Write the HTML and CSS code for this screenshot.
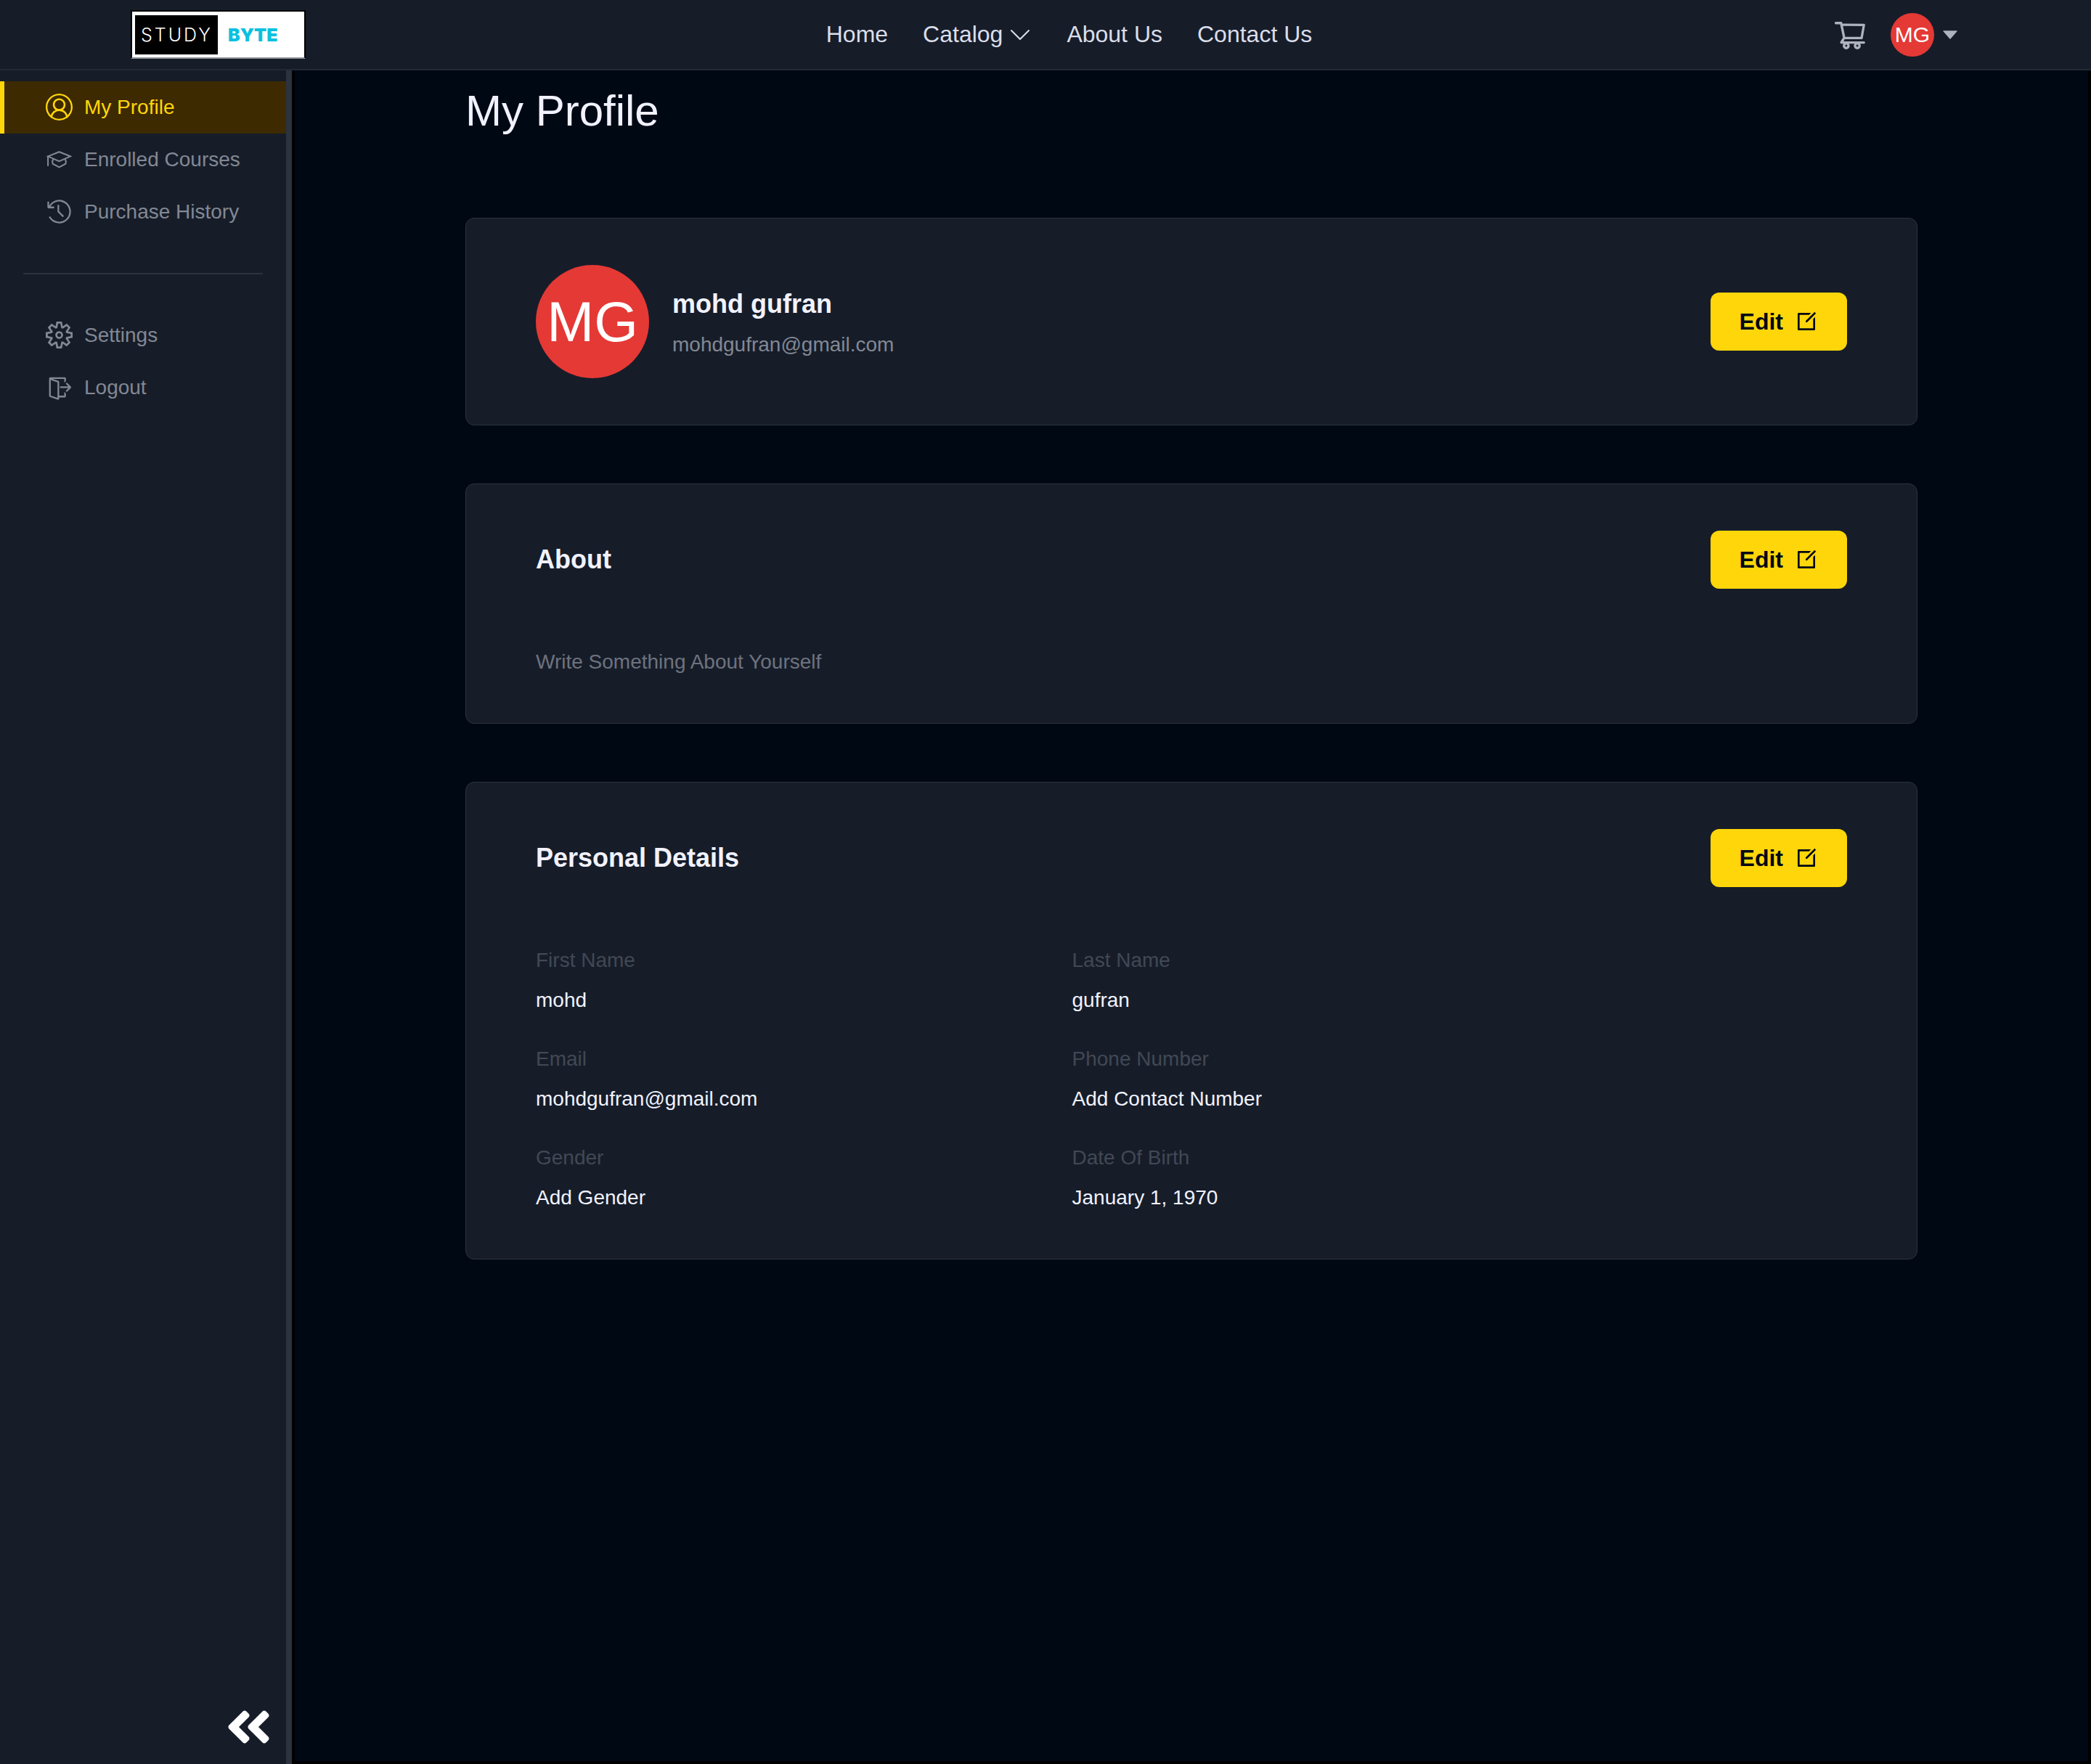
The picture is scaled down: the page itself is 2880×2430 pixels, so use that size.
FILE: index.html
```html
<!DOCTYPE html>
<html lang="en">
<head>
<meta charset="utf-8">
<meta name="viewport" content="width=device-width, initial-scale=1">
<title>My Profile</title>
<link rel="stylesheet" href="styles.css">
</head>
<body>
<svg class="sprite" aria-hidden="true">
  <symbol id="icon-edit" viewBox="0 0 24 24"><path d="M16.7574 2.99678L14.7574 4.99678H5V18.9968H19V9.23943L21 7.23943V19.9968C21 20.5491 20.5523 20.9968 20 20.9968H4C3.44772 20.9968 3 20.5491 3 19.9968V3.99678C3 3.4445 3.44772 2.99678 4 2.99678H16.7574ZM20.4853 2.09729L21.8995 3.5115L12.7071 12.7039L11.2954 12.7064L11.2929 11.2897L20.4853 2.09729Z"/></symbol>
</svg>

<header class="topbar">
  <div class="topbar-inner">
    <a class="logo" href="#"><span class="logo-study">STUDY</span><span class="logo-byte">BYTE</span></a>
    <nav class="nav">
      <a href="#">Home</a>
      <a class="nav-catalog" href="#">Catalog
        <svg class="icon-nav" viewBox="0 0 16 16"><path fill-rule="evenodd" d="M1.646 4.646a.5.5 0 0 1 .708 0L8 10.293l5.646-5.647a.5.5 0 0 1 .708.708l-6 6a.5.5 0 0 1-.708 0l-6-6a.5.5 0 0 1 0-.708z"/></svg>
      </a>
      <a href="#">About Us</a>
      <a href="#">Contact Us</a>
    </nav>
    <div class="account">
      <a class="cart" href="#" aria-label="Cart">
        <svg class="icon-cart" viewBox="0 0 1024 1024"><path d="M922.9 701.9H327.4l29.9-60.9 496.8-.9c16.8 0 31.2-12 34.2-28.6l68.8-385.1c1.8-10.1-.9-20.5-7.5-28.4a34.99 34.99 0 0 0-26.6-12.5l-632-2.1-5.4-25.4c-3.4-16.2-18-28-34.6-28H96.5a35.3 35.3 0 1 0 0 70.6h125.9L246 312.8l58.1 281.3-74.8 122.1a34.96 34.96 0 0 0-3 36.8c6 11.9 18.1 19.4 31.5 19.4h62.8a102.43 102.43 0 0 0-20.6 61.7c0 56.6 46 102.6 102.6 102.6s102.6-46 102.6-102.6c0-22.3-7.4-44-20.6-61.7h161.1a102.43 102.43 0 0 0-20.6 61.7c0 56.6 46 102.6 102.6 102.6s102.6-46 102.6-102.6c0-22.3-7.4-44-20.6-61.7H923c19.4 0 35.3-15.8 35.3-35.3a35.42 35.42 0 0 0-35.4-35.2zM305.7 253l575.8 1.9-56.4 315.8-452.3.8L305.7 253zm96.9 612.7c-17.4 0-31.6-14.2-31.6-31.6 0-17.4 14.2-31.6 31.6-31.6s31.6 14.2 31.6 31.6a31.6 31.6 0 0 1-31.6 31.6zm325.1 0c-17.4 0-31.6-14.2-31.6-31.6 0-17.4 14.2-31.6 31.6-31.6s31.6 14.2 31.6 31.6a31.6 31.6 0 0 1-31.6 31.6z"/></svg>
      </a>
      <button class="account-menu" type="button">
        <span class="avatar avatar-small">MG</span>
        <svg class="icon-caret" viewBox="0 0 1024 1024"><path d="M840.4 300H183.6c-19.7 0-30.7 20.8-18.5 35l328.4 380.8c9.4 10.9 27.5 10.9 37 0L858.9 335c12.2-14.2 1.2-35-18.5-35z"/></svg>
      </button>
    </div>
  </div>
</header>

<div class="layout">
  <aside class="sidebar">
    <nav class="menu">
      <a class="menu-item is-active" href="#">
        <svg class="icon-menu" viewBox="0 0 16 16"><path d="M16 7.992C16 3.58 12.416 0 8 0S0 3.58 0 7.992c0 2.43 1.104 4.62 2.832 6.09.016.016.032.016.032.032.144.112.288.224.448.336.08.048.144.111.224.175A7.98 7.98 0 0 0 8.016 16a7.98 7.98 0 0 0 4.48-1.375c.08-.048.144-.111.224-.16.144-.111.304-.223.448-.335.016-.016.032-.016.032-.032 1.696-1.487 2.8-3.676 2.8-6.106zm-8 7.001c-1.504 0-2.88-.48-4.016-1.279.016-.128.048-.255.08-.383a4.17 4.17 0 0 1 .416-.991c.176-.304.384-.576.64-.816.24-.24.528-.463.816-.639.304-.176.624-.304.976-.4A4.15 4.15 0 0 1 8 10.342a4.185 4.185 0 0 1 2.928 1.166c.368.368.656.8.864 1.295.112.288.192.592.24.911A7.03 7.03 0 0 1 8 14.993zm-2.448-7.4a2.49 2.49 0 0 1-.208-1.024c0-.351.064-.703.208-1.023.144-.32.336-.607.576-.847.24-.24.528-.431.848-.575.32-.144.672-.208 1.024-.208.368 0 .704.064 1.024.208.32.144.608.336.848.575.24.24.432.528.576.847.144.32.208.672.208 1.023 0 .368-.064.704-.208 1.023a2.84 2.84 0 0 1-.576.848 2.84 2.84 0 0 1-.848.575 2.715 2.715 0 0 1-2.064 0 2.84 2.84 0 0 1-.848-.575 2.526 2.526 0 0 1-.56-.848zm7.424 5.306c0-.032-.016-.048-.016-.08a5.22 5.22 0 0 0-.688-1.406 4.883 4.883 0 0 0-1.088-1.135 5.207 5.207 0 0 0-1.04-.608 2.82 2.82 0 0 0 .464-.383 4.2 4.2 0 0 0 .624-.784 3.624 3.624 0 0 0 .528-1.934 3.71 3.71 0 0 0-.288-1.47 3.799 3.799 0 0 0-.816-1.199 3.845 3.845 0 0 0-1.2-.8 3.72 3.72 0 0 0-1.472-.287 3.72 3.72 0 0 0-1.472.288 3.631 3.631 0 0 0-1.2.815 3.84 3.84 0 0 0-.8 1.199 3.71 3.71 0 0 0-.288 1.47c0 .352.048.688.144 1.007.096.336.224.64.4.927.16.288.384.544.624.784.144.144.304.271.48.383a5.12 5.12 0 0 0-1.04.624c-.416.32-.784.703-1.088 1.119a4.999 4.999 0 0 0-.688 1.406c-.016.032-.016.064-.016.08C1.776 11.636.992 9.91.992 7.992.992 4.14 4.144.991 8 .991s7.008 3.149 7.008 7.001a6.96 6.96 0 0 1-2.032 4.907z"/></svg>
        My Profile
      </a>
      <a class="menu-item" href="#">
        <svg class="icon-menu icon-stroke" viewBox="0 0 36 36"><path d="M3 14L18 8l15 6-15 6.500zM3 14V27M10.500 17.500c-2 2-2 4-1 6.500L18 28.500l8.500-4.500c1-2.500 1-4.500-1-6.500"/></svg>
        Enrolled Courses
      </a>
      <a class="menu-item" href="#">
        <svg class="icon-menu" viewBox="0 0 16 16"><path d="M13.507 12.324a7 7 0 0 0 .065-8.56A7 7 0 0 0 2 4.393V2H1v3.5l.5.5H5V5H2.811a6.008 6.008 0 1 1-.135 5.77l-.887.462a7 7 0 0 0 11.718 1.092zm-3.361-.97l.708-.707L8 7.792V4H7v4l.146.354 3 3z"/></svg>
        Purchase History
      </a>
    </nav>
    <hr class="divider">
    <div class="menu">
      <a class="menu-item" href="#">
        <svg class="icon-menu" viewBox="0 0 24 24"><path fill-rule="evenodd" d="M19.85 8.75l4.15.83v4.84l-4.15.83 2.35 3.52-3.43 3.43-3.52-2.35-.83 4.15H9.58l-.83-4.15-3.52 2.35-3.43-3.43 2.35-3.52L0 14.42V9.58l4.15-.83L1.8 5.23 5.23 1.8l3.52 2.35L9.58 0h4.84l.83 4.15 3.52-2.35 3.43 3.43-2.35 3.52zm-1.57 5.07l4-.81v-2l-4-.81-.54-1.3 2.29-3.43-1.43-1.43-3.43 2.29-1.3-.54-.81-4h-2l-.81 4-1.3.54-3.43-2.29-1.43 1.43L6.38 8.9l-.54 1.3-4 .81v2l4 .81.54 1.3-2.29 3.43 1.43 1.43 3.43-2.29 1.3.54.81 4h2l.81-4 1.3-.54 3.43 2.29 1.43-1.43-2.29-3.43.54-1.3zm-8.186-4.672A3.43 3.43 0 0 1 12 8.57 3.44 3.44 0 0 1 15.43 12a3.43 3.43 0 1 1-5.336-2.852zm.956 4.274c.281.188.612.288.95.288A1.7 1.7 0 0 0 13.71 12a1.71 1.71 0 1 0-2.66 1.422z"/></svg>
        Settings
      </a>
      <button class="menu-item" type="button">
        <svg class="icon-menu" viewBox="0 0 16 16"><path fill-rule="evenodd" d="M11.02 3.77v1.56l1-.99V2.5l-.5-.5h-9l-.51.5v.493L2 3v10.29l.36.46 5 1.72L8 15v-1h3.52l.5-.5v-1.81l-1-1V13H8V4.71l-.33-.46L4.036 3h6.984v.77zM7 14.28l-4-1.34V3.72l4 1.34v9.22zm6.52-5.8H8.55v-1h4.93l-1.6-1.6.71-.7 2.47 2.46v.71l-2.49 2.48-.7-.7 1.65-1.65z"/></svg>
        Logout
      </button>
    </div>
    <button class="collapse" type="button" aria-label="Collapse sidebar">
      <svg class="icon-collapse" viewBox="0 0 448 512"><path d="M223.7 239l136-136c9.400-9.400 24.600-9.400 33.900 0l22.600 22.600c9.400 9.400 9.400 24.600 0 33.900L319.900 256l96.400 96.400c9.400 9.400 9.400 24.600 0 33.900L393.700 409c-9.400 9.400-24.600 9.400-33.900 0l-136-136c-9.500-9.400-9.500-24.600-.1-34zm-192 34l136 136c9.400 9.400 24.600 9.400 33.900 0l22.600-22.600c9.400-9.400 9.400-24.600 0-33.900L127.900 256l96.400-96.400c9.400-9.400 9.400-24.600 0-33.900L201.700 103c-9.400-9.400-24.600-9.400-33.900 0l-136 136c-9.500 9.400-9.500 24.600-.1 34z"/></svg>
    </button>
  </aside>

  <main class="content">
    <div class="content-inner">
      <h1 class="title">My Profile</h1>

      <section class="card card-row">
        <div class="person">
          <span class="avatar avatar-large">MG</span>
          <div class="person-text">
            <h2 class="heading">mohd gufran</h2>
            <p class="muted">mohdgufran@gmail.com</p>
          </div>
        </div>
        <button class="edit" type="button">Edit <svg class="icon-edit"><use href="#icon-edit"/></svg></button>
      </section>

      <section class="card">
        <div class="card-row">
          <h2 class="heading">About</h2>
          <button class="edit" type="button">Edit <svg class="icon-edit"><use href="#icon-edit"/></svg></button>
        </div>
        <p class="about">Write Something About Yourself</p>
      </section>

      <section class="card">
        <div class="card-row">
          <h2 class="heading">Personal Details</h2>
          <button class="edit" type="button">Edit <svg class="icon-edit"><use href="#icon-edit"/></svg></button>
        </div>
        <div class="details">
          <dl class="details-column">
            <div class="field"><dt>First Name</dt><dd>mohd</dd></div>
            <div class="field"><dt>Email</dt><dd>mohdgufran@gmail.com</dd></div>
            <div class="field"><dt>Gender</dt><dd>Add Gender</dd></div>
          </dl>
          <dl class="details-column">
            <div class="field"><dt>Last Name</dt><dd>gufran</dd></div>
            <div class="field"><dt>Phone Number</dt><dd>Add Contact Number</dd></div>
            <div class="field"><dt>Date Of Birth</dt><dd>January 1, 1970</dd></div>
          </dl>
        </div>
      </section>
    </div>
  </main>
</div>
</body>
</html>
```

FILE: styles.css
```css
* {
  box-sizing: border-box;
}

body {
  margin: 0;
  min-height: 100vh;
  display: flex;
  flex-direction: column;
  background: #000;
  color: #f1f2ff;
  font-family: "Liberation Sans", Arial, sans-serif;
  font-size: 28px;
  line-height: 41px;
}

a {
  color: inherit;
  text-decoration: none;
}

button {
  margin: 0;
  padding: 0;
  border: 0;
  background: none;
  color: inherit;
  font: inherit;
  cursor: pointer;
}

h1, h2, p, dl, dd {
  margin: 0;
}

svg {
  display: block;
  flex: none;
  fill: currentColor;
}

.sprite {
  position: absolute;
  width: 0;
  height: 0;
}

/* Top bar */

.topbar {
  height: 97px;
  display: flex;
  justify-content: center;
  background: #161d29;
  border-bottom: 2px solid #232a36;
}

.topbar-inner {
  flex: 1;
  max-width: 2520px;
  display: flex;
  align-items: center;
  justify-content: space-between;
}

.logo {
  width: 241px;
  height: 67px;
  padding: 4px;
  display: flex;
  align-items: center;
  background: #fff;
  border: 2px solid #000;
  border-bottom-color: #8c8f96;
  font-family: Inter, sans-serif;
  font-size: 25px;
  line-height: 54px;
}

.logo-study {
  width: 114px;
  padding-left: 8px;
  background: #000;
  color: #fff;
  font-weight: 300;
  letter-spacing: 3px;
}

.logo-byte {
  padding-left: 14px;
  color: #0cc0df;
  font-weight: 900;
}

.nav {
  display: flex;
  gap: 48px;
  color: #dbddea;
  font-size: 32px;
}

.nav-catalog {
  display: flex;
  align-items: center;
  gap: 8px;
}

.icon-nav {
  width: 32px;
  height: 32px;
}

.account,
.account-menu {
  display: flex;
  align-items: center;
  color: #afb2bf;
}

.account {
  gap: 32px;
}

.account-menu {
  gap: 8px;
}

.icon-cart {
  width: 48px;
  height: 48px;
}

.icon-caret {
  width: 28px;
  height: 28px;
}

.avatar {
  display: flex;
  align-items: center;
  justify-content: center;
  border-radius: 50%;
  background: #e53935;
  color: #fff;
}

.avatar-small {
  width: 60px;
  height: 60px;
  font-size: 30px;
}

.avatar-large {
  width: 156px;
  height: 156px;
  font-size: 78px;
}

/* Sidebar */

.layout {
  flex: 1;
  display: flex;
}

.sidebar {
  width: 402px;
  flex: none;
  padding: 15px 0;
  display: flex;
  flex-direction: column;
  background: #161d29;
  border-right: 8px solid #2c333f;
  color: #838894;
}

.menu {
  display: flex;
  flex-direction: column;
}

.menu-item {
  height: 72px;
  padding: 0 0 2px 57px;
  display: flex;
  align-items: center;
  gap: 16px;
  border-left: 6px solid transparent;
}

.menu-item.is-active {
  background: #3d2a01;
  border-left-color: #ffd60a;
  color: #ffd60a;
}

.icon-menu {
  width: 37px;
  height: 37px;
}

.icon-stroke {
  fill: none;
  stroke: currentColor;
  stroke-width: 2;
}

.divider {
  width: 330px;
  height: 2px;
  margin: 48px auto;
  border: 0;
  background: #2c333f;
}

.collapse {
  margin: auto 20px 0 auto;
  color: #fff;
}

.icon-collapse {
  width: 63px;
  height: 72px;
}

/* Profile */

.content {
  flex: 1;
  padding: 17px 0 80px;
  background: #000814;
  border: solid #000;
  border-width: 0 4px 4px;
}

.content-inner {
  width: 90%;
  max-width: 2000px;
  margin: 0 auto;
  display: flex;
  flex-direction: column;
  gap: 80px;
}

.title {
  margin-bottom: 28px;
  font-size: 60px;
  line-height: 78px;
  font-weight: 400;
}

.card {
  padding: 64px 96px;
  background: #161d29;
  border: 1px solid #2c333f;
  border-radius: 12px;
}

.card-row {
  display: flex;
  align-items: center;
  justify-content: space-between;
}

.person {
  display: flex;
  align-items: center;
  gap: 32px;
}

.person-text {
  display: flex;
  flex-direction: column;
  gap: 8px;
}

.heading {
  font-size: 36px;
  line-height: 54px;
  font-weight: 700;
}

.muted {
  color: #838894;
}

.about {
  margin-top: 80px;
  color: #6e727f;
}

.edit {
  height: 80px;
  padding: 0 40px;
  display: flex;
  align-items: center;
  gap: 16px;
  background: #ffd60a;
  border-radius: 12px;
  color: #000814;
  font-size: 32px;
  font-weight: 700;
}

.icon-edit {
  width: 32px;
  height: 32px;
}

.details {
  max-width: 1000px;
  margin-top: 80px;
  display: flex;
  justify-content: space-between;
}

.details-column {
  display: flex;
  flex-direction: column;
  gap: 40px;
}

.field {
  display: flex;
  flex-direction: column;
  gap: 14px;
}

.field dt {
  color: #424854;
}
```
